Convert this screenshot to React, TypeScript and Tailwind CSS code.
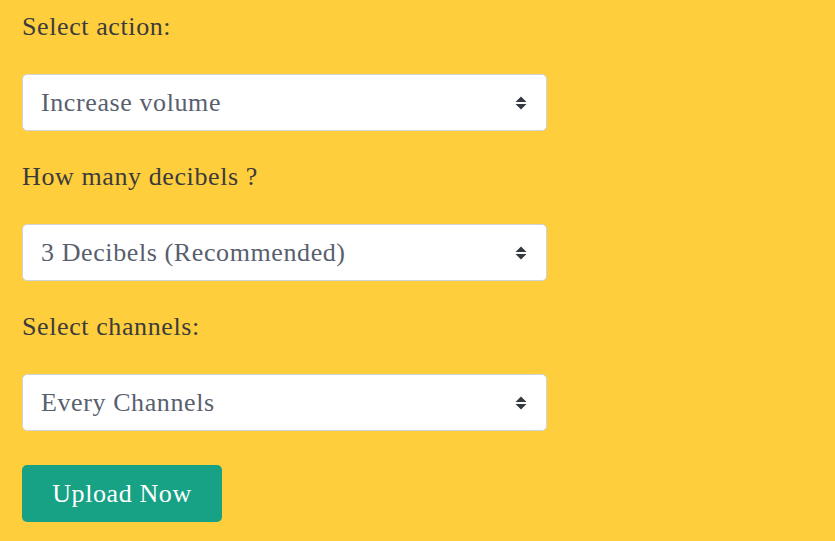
import React from "react";

type FieldProps = {
  label: string;
  options: string[];
};

function Arrows() {
  return (
    <svg width="12" height="15" viewBox="0 0 12 15" className="pointer-events-none absolute right-[20px] top-1/2 -translate-y-1/2">
      <path d="M6 1 L11.5 6.5 L0.5 6.5 Z" fill="#343a40" />
      <path d="M6 14 L11.5 8.5 L0.5 8.5 Z" fill="#343a40" />
    </svg>
  );
}

function Field({ label, options }: FieldProps) {
  return (
    <div className="flex flex-col">
      <label className="text-[26px] leading-[36px] tracking-[0.6px] text-[#3b3b3b]">{label}</label>
      <div className="relative mt-[29px] w-[525px]">
        <select
          className="block h-[57px] w-full appearance-none rounded-[5px] border border-[#ced4da] bg-white pl-[18px] pr-10 text-[26px] tracking-[0.6px] text-[#58606e] outline-none"
          defaultValue={options[0]}
        >
          {options.map((o) => (
            <option key={o}>{o}</option>
          ))}
        </select>
        <Arrows />
      </div>
    </div>
  );
}

export default function App() {
  return (
    <div
      className="min-h-[541px] w-full bg-[#ffce3c] pl-[22px] pt-[9px]"
      style={{ fontFamily: '"Liberation Serif", serif' }}
    >
      <div className="flex flex-col gap-[28px]">
        <Field label="Select action:" options={["Increase volume", "Decrease volume"]} />
        <Field label="How many decibels ?" options={["3 Decibels (Recommended)", "6 Decibels", "9 Decibels"]} />
        <Field label="Select channels:" options={["Every Channels", "Left Channel", "Right Channel"]} />
      </div>
      <button className="mt-[34px] block h-[57px] w-[200px] rounded-[5px] bg-[#17a185] text-[26px] tracking-[0.6px] text-white">
        Upload Now
      </button>
    </div>
  );
}
